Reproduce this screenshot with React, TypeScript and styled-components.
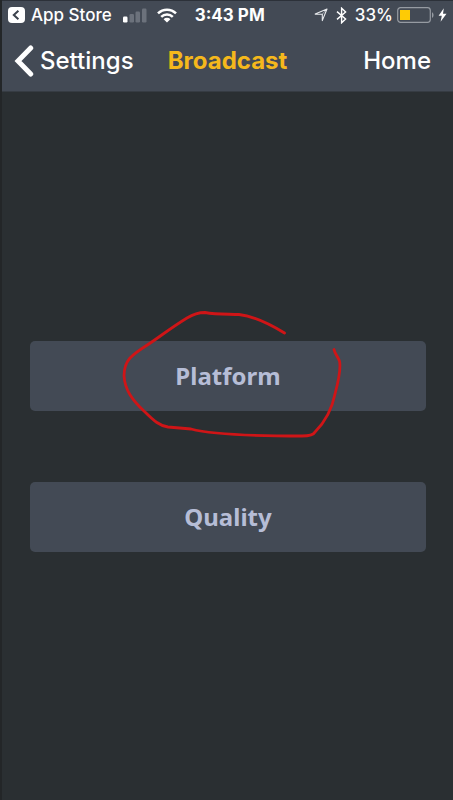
import React from "react";
import styled, { createGlobalStyle } from "styled-components";

const GlobalStyle = createGlobalStyle`
  *, *::before, *::after { box-sizing: border-box; }
  body { margin: 0; background: #2a2f32; }
`;

const Screen = styled.div`
  display: flex;
  flex-direction: column;
  min-height: 100vh;
  background: #2a2f32;
  border-left: 2px solid #232628;
  color: #fff;
  font-family: Inter, "Liberation Sans", sans-serif;
`;

const Header = styled.header`
  height: 92px;
  background: #434a55;
  border-top: 1px solid #2c3139;
  border-bottom: 1px solid #363c43;
`;

const StatusBar = styled.div`
  display: flex;
  align-items: center;
  height: 28px;
  padding: 0 6px;
  font-size: 17px;
  font-weight: 500;
  line-height: 20px;
  white-space: nowrap;

  svg { display: block; flex: none; }
`;

const StatusGroup = styled.div<{ $gap: number; $end?: boolean }>`
  display: flex;
  align-items: center;
  gap: ${(p) => p.$gap}px;
  margin-left: ${(p) => (p.$end ? "auto" : "0")};
`;

const PlainButton = styled.button`
  display: flex;
  align-items: center;
  gap: 6px;
  padding: 0;
  border: 0;
  background: none;
  color: inherit;
  font: inherit;
  cursor: pointer;
`;

const Clock = styled.time`
  margin-left: 18px;
  font-weight: 700;
`;

const NavBar = styled.nav`
  display: grid;
  grid-template-columns: 1fr auto 1fr;
  align-items: center;
  height: 64px;
  padding: 0 12px;
  font-size: 24px;
  font-weight: 500;
  line-height: 32px;

  svg { display: block; flex: none; }
`;

const HomeButton = styled(PlainButton)`
  justify-self: end;
  padding-right: 10px;
`;

const Title = styled.h1`
  margin: 0;
  color: #f5b81c;
  font-size: 24px;
  font-weight: 700;
  line-height: 32px;
`;

const Content = styled.main`
  flex: 1;
  display: flex;
  flex-direction: column;
  justify-content: center;
  gap: 71px;
  padding: 0 27px 0 28px;
`;

const OptionWrap = styled.div`
  position: relative;
  display: flex;
`;

const OptionButton = styled.button`
  flex: 1;
  height: 70px;
  border: 0;
  border-radius: 5px;
  background: #434a55;
  color: #b6bdd6;
  font-family: "Noto Sans", "Open Sans", sans-serif;
  font-size: 24px;
  font-weight: 700;
  line-height: 32px;
  cursor: pointer;
`;

const Scribble = styled.svg`
  position: absolute;
  top: 50%;
  left: 50%;
  width: 236px;
  height: 152px;
  transform: translate(-50%, -50%);
  pointer-events: none;
`;

const BackBadge = () => (
  <svg width="17" height="16" viewBox="0 0 17 16" aria-hidden="true">
    <rect width="17" height="16" rx="4" fill="#fff" />
    <path d="M10.4 3.8 5.8 8l4.6 4.2" fill="none" stroke="#3b424c" strokeWidth="2" />
  </svg>
);

const Signal = () => (
  <svg width="25" height="15" viewBox="0 0 25 15" aria-hidden="true">
    <rect x="1" y="8.5" width="4.5" height="6" rx="1.2" fill="#fff" />
    <g fill="#6c727c">
      <rect x="7.5" y="6" width="4.5" height="8.5" rx="1.2" />
      <rect x="13.5" y="3.5" width="4.5" height="11" rx="1.2" />
      <rect x="20" y="0.5" width="4.5" height="14" rx="1.2" />
    </g>
  </svg>
);

const Wifi = () => (
  <svg width="20" height="15" viewBox="0 0 20 15" aria-hidden="true">
    <g fill="none" stroke="#fff" strokeWidth="2.5">
      <path d="M1 5.4a12.7 12.7 0 0 1 18 0" />
      <path d="M4.2 8.8a8.2 8.2 0 0 1 11.6 0" />
    </g>
    <path d="M10 14.6 6.6 11.2a4.8 4.8 0 0 1 6.8 0Z" fill="#fff" />
  </svg>
);

const Location = () => (
  <svg width="14" height="14" viewBox="0 0 14 14" aria-hidden="true">
    <path d="M13 1 8.3 12.6V6.2L1.2 6.1Z" fill="none" stroke="#e8eaed" strokeWidth="1.1" strokeLinejoin="round" />
    <path d="M13 1 8.3 6.2" stroke="#e8eaed" strokeWidth="0.6" />
  </svg>
);

const Bluetooth = () => (
  <svg width="11" height="17" viewBox="0 0 11 17" aria-hidden="true">
    <path d="M1 4.6 9.6 12 5.6 15.8V1.2l4 3.8L1 12.4" fill="none" stroke="#fff" strokeWidth="1.4" />
  </svg>
);

const Battery = () => (
  <svg width="37" height="16" viewBox="0 0 37 16" aria-hidden="true">
    <rect x="0.7" y="0.7" width="32.6" height="14.6" rx="2.8" fill="none" stroke="#969ba2" strokeWidth="1.2" />
    <rect x="3" y="3" width="10" height="10" fill="#fecb05" />
    <path d="M35 5.2c2 .8 2 4.8 0 5.6Z" fill="#969ba2" />
  </svg>
);

const Bolt = () => (
  <svg width="9" height="14" viewBox="0 0 9 14" aria-hidden="true">
    <path d="M5.8.2.6 7.8h3.2L2.6 13.8 8.5 5.7H5Z" fill="#fff" />
  </svg>
);

const Chevron = () => (
  <svg width="20" height="32" viewBox="0 0 20 32" aria-hidden="true">
    <path d="M16.7 3 4 16l12.7 13" fill="none" stroke="#fff" strokeWidth="5" strokeLinecap="round" strokeLinejoin="miter" />
  </svg>
);

export default function App() {
  return (
    <Screen>
      <GlobalStyle />
      <Header>
        <StatusBar>
          <StatusGroup $gap={10}>
            <PlainButton type="button">
              <BackBadge />
              App Store
            </PlainButton>
            <Signal />
            <Wifi />
          </StatusGroup>
          <Clock>3:43 PM</Clock>
          <StatusGroup $gap={8} $end>
            <Location />
            <Bluetooth />
            <StatusGroup $gap={4}>
              <span>33%</span>
              <Battery />
              <Bolt />
            </StatusGroup>
          </StatusGroup>
        </StatusBar>
        <NavBar aria-label="Main">
          <PlainButton type="button">
            <Chevron />
            Settings
          </PlainButton>
          <Title>Broadcast</Title>
          <HomeButton type="button">Home</HomeButton>
        </NavBar>
      </Header>
      <Content>
        <OptionWrap>
          <OptionButton type="button">Platform</OptionButton>
          <Scribble viewBox="110 300 236 152" aria-hidden="true">
            <path
              d="M284.500 333C268 323 252 316 239 314.500C227 314 216 314.500 205 312.500Q196 312.500 187 318C169 329 157 339 145 346.500C138 351 134 354 130 358Q124 365 124 376C125 390 132 400 145 412C154 421 160 426 168 427L191 429C210 434 250 436 302 436Q313 436 315 432C325 422 332 409 335 394C339 379 341 368 339.500 361C337.500 356 335 354 334 349.500"
              fill="none"
              stroke="#cf1517"
              strokeWidth="2.8"
              strokeLinecap="round"
              strokeLinejoin="round"
            />
          </Scribble>
        </OptionWrap>
        <OptionWrap>
          <OptionButton type="button">Quality</OptionButton>
        </OptionWrap>
      </Content>
    </Screen>
  );
}
